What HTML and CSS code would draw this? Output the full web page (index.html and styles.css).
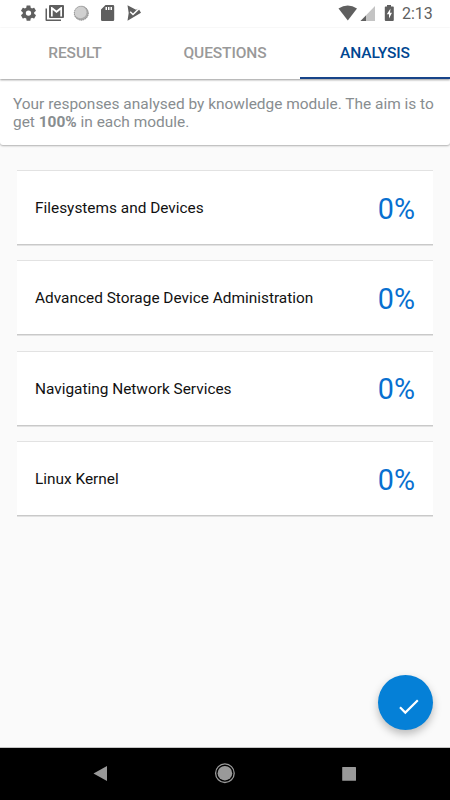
FILE: index.html
```html
<!DOCTYPE html>
<html lang="en">
<head>
<meta charset="utf-8">
<title>Analysis</title>
<link rel="stylesheet" href="styles.css">
</head>
<body>
<div class="screen">
  <header class="status">
    <svg class="status-left" width="150" height="28" viewBox="0 0 150 28">
      <g fill="#5f5f5f">
        <path transform="translate(19.3 3.9) scale(.765)" d="M19.43 12.98c.04-.32.07-.64.07-.98s-.03-.66-.07-.98l2.11-1.65c.19-.15.24-.42.12-.64l-2-3.46c-.12-.22-.39-.3-.61-.22l-2.49 1c-.52-.4-1.08-.73-1.69-.98l-.38-2.65C14.46 2.18 14.25 2 14 2h-4c-.25 0-.46.18-.49.42l-.38 2.65c-.61.25-1.17.59-1.69.98l-2.49-1c-.23-.09-.49 0-.61.22l-2 3.46c-.13.22-.07.49.12.64l2.11 1.65c-.04.32-.07.65-.07.98s.03.66.07.98l-2.11 1.65c-.19.15-.24.42-.12.64l2 3.46c.12.22.39.3.61.22l2.49-1c.52.4 1.08.73 1.69.98l.38 2.65c.03.24.24.42.49.42h4c.25 0 .46-.18.49-.42l.38-2.65c.61-.25 1.17-.59 1.69-.98l2.49 1c.23.09.49 0 .61-.22l2-3.46c.12-.22.07-.49-.12-.64zM12 15.5A3.5 3.5 0 1 1 12 8.500a3.500 3.500 0 0 1 0 7z"/>
        <path fill-rule="evenodd" d="M50 5h13q1 0 1 1v11q0 1-1 1H50q-1 0-1-1V6q0-1 1-1zM51 7v9.500h1.700V10l3.800 3 3.800-3v6.500H62V7h-1l-4.500 3.500L52 7z"/>
        <path d="M45.500 8.500H47V19.500H61V21H46.500Q45.500 21 45.500 20z"/>
        <path fill-rule="evenodd" d="M105.500 5H113q1.200 0 1.200 1.200v13.600q0 1.200-1.200 1.200h-10.800q-1.200 0-1.200-1.200V9.500zM105.500 7v3h1.500V7zm2.500 0v3h1.500V7zm2.500 0v3h1.500V7z"/>
        <path d="M127.500 5.200L136 9.800 138.500 8.500 141 12.800 127.500 20.800 128.700 13z"/>
      </g>
      <path d="M130.200 11.700L133 14.500 139.800 7.900" fill="none" stroke="#fff" stroke-width="1.500"/>
      <circle cx="81.300" cy="13.200" r="7.300" fill="#aaa"/>
      <circle cx="80.500" cy="12.300" r="6" fill="#d0d0d0"/>
      <circle cx="81.300" cy="13.200" r="7" fill="none" stroke="#8c8c8c" stroke-dasharray="1 1"/>
    </svg>
    <svg class="status-right" width="74" height="28" viewBox="334 0 74 28">
      <path fill="#5f5f5f" d="M338.500 8.500Q347.800 2.500 357 8.500L347.800 20.500z"/>
      <path fill="#c4c4c4" d="M375 6V21H360.500z"/>
      <path fill="#5f5f5f" d="M366 15.500V21H360.500z"/>
      <path fill="#5f5f5f" d="M387 5h4v1.500h2q.8 0 .8.800V20q0 1-1 1h-7q-1 0-1-1V7.300q0-.8.800-.8h1.400z"/>
      <path fill="#fff" d="M390.500 8.500L386.800 14.300H389V18.500L392 12.700H390z"/>
    </svg>
    <span class="clock">2:13</span>
  </header>
  <nav class="tabs">
    <div class="tab"><span>RESULT</span></div>
    <div class="tab"><span>QUESTIONS</span></div>
    <div class="tab active"><span>ANALYSIS</span></div>
  </nav>
  <section class="intro"><span>Your responses analysed by knowledge module. The aim is to</span><br><span>get <b>100%</b> in each module.</span></section>
  <main class="modules">
    <article class="card"><span>Filesystems and Devices</span><strong>0%</strong></article>
    <article class="card"><span>Advanced Storage Device Administration</span><strong>0%</strong></article>
    <article class="card"><span>Navigating Network Services</span><strong>0%</strong></article>
    <article class="card"><span>Linux Kernel</span><strong>0%</strong></article>
  </main>
  <button class="fab" aria-label="Done">
    <svg width="54" height="54" viewBox="0 0 54 54"><path d="M22 31.300L27.300 36.600 39.800 24.300" fill="none" stroke="#fff" stroke-width="2.200"/></svg>
  </button>
  <footer class="navbar">
    <svg width="450" height="52" viewBox="0 0 450 52">
      <path fill="#999" d="M93.500 25.500L107 18V33z"/>
      <circle cx="224.900" cy="25.200" r="9.300" fill="none" stroke="#999" stroke-width="1.300"/>
      <circle cx="224.900" cy="25.200" r="7.300" fill="#999"/>
      <rect x="342.200" y="19" width="13.800" height="13.800" rx=".5" fill="#999"/>
    </svg>
  </footer>
</div>
</body>
</html>
```
FILE: styles.css
```css
* { box-sizing: border-box; }
body { margin: 0; font-family: Roboto, "Liberation Sans", sans-serif; }
.screen {
  position: relative;
  display: flex;
  flex-direction: column;
  width: 450px;
  height: 800px;
  overflow: hidden;
  background: #fafafa;
}
svg { display: block; }
.status { display: flex; height: 28px; background: #fff; color: #5f5f5f; }
.status-right { margin-left: 184px; }
.clock { margin-top: 4px; margin-left: -6px; font-size: 16px; line-height: 20px; }
.tabs {
  position: relative;
  z-index: 1;
  display: grid;
  grid-template-columns: repeat(3, 1fr);
  height: 51px;
  background: #fff;
  box-shadow: 0 1px 2px rgba(0, 0, 0, .4);
}
.tab {
  display: flex;
  justify-content: center;
  padding-top: 15px;
  font-size: 15.500px;
  line-height: 20px;
  letter-spacing: -.1px;
  font-weight: 500;
  color: #999;
}
.tab.active { color: #004691; border-bottom: 2px solid #174489; }
.intro {
  height: 65.500px;
  padding: 15.500px 0 0 13px;
  border-radius: 0 0 3px 3px;
  background: #fff;
  box-shadow: 0 .5px 2px rgba(0, 0, 0, .3);
  color: #888d90;
  font-size: 15.450px;
  line-height: 18px;
  white-space: nowrap;
}
.modules { display: flex; flex-direction: column; gap: 16.400px; padding: 25.500px 17px 0; }
.card {
  display: flex;
  align-items: center;
  justify-content: space-between;
  height: 74px;
  padding: 1px 18px 0;
  border-top: 1px solid #e2e2e2;
  background: #fff;
  box-shadow: 0 1.500px 0 #c9c9c9;
  color: #111;
  font-size: 15.400px;
}
.card strong { padding-top: 1px; color: #0870d0; font-size: 28.700px; font-weight: 400; line-height: 34px; }
.fab {
  position: absolute;
  left: 378px;
  top: 675px;
  width: 55px;
  height: 55px;
  padding: 0;
  border: 0;
  border-radius: 50%;
  background: #0580d7;
  box-shadow: 0 4px 9px rgba(0, 0, 0, .26);
}
.navbar { height: 53px; margin-top: auto; border-top: 1px solid #c4c4c4; background: #000; }
```
